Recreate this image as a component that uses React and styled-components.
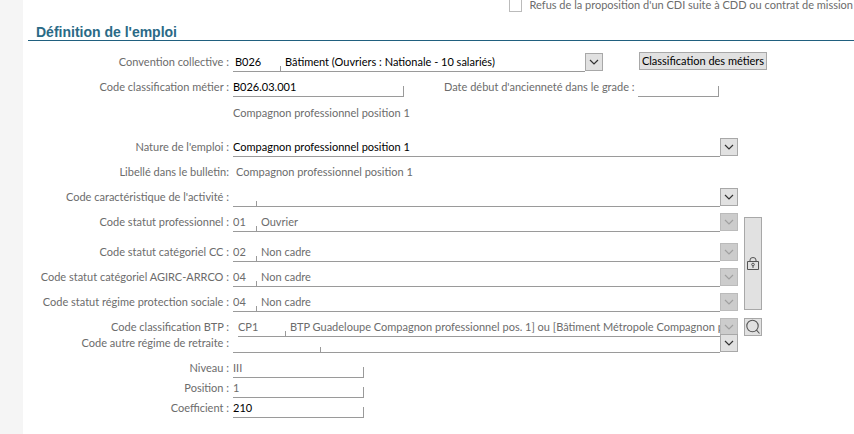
import styled, { createGlobalStyle } from "styled-components"

export default function App() {
    return (
        <Page>
            <GlobalStyle />
            <Margin />
            <Main>
                <Refusal>
                    <input type="checkbox" id="refus" />
                    <label htmlFor="refus">Refus de la proposition d'un CDI suite à CDD ou contrat de mission</label>
                </Refusal>
                <Title>Définition de l'emploi</Title>
                <Form>
                    <Row>
                        <Label htmlFor="convention">Convention collective :</Label>
                        <ShortCombo>
                            <Combo id="convention" code="B026" codeWidth={47} indent={2} text="Bâtiment (Ouvriers : Nationale - 10 salariés)" />
                        </ShortCombo>
                        <MetierButton type="button">Classification des métiers</MetierButton>
                    </Row>
                    <Row $gap={6}>
                        <Label htmlFor="metier">Code classification métier :</Label>
                        <Notched id="metier" value="B026.03.001" width={171} />
                        <DateLabel htmlFor="grade">Date début d'ancienneté dans le grade :</DateLabel>
                        <Notched id="grade" value="" width={81} />
                    </Row>
                    <Row $gap={7}>
                        <Label as="span" />
                        <Text>Compagnon professionnel position 1</Text>
                    </Row>
                    <Row $gap={15}>
                        <Label htmlFor="nature">Nature de l'emploi :</Label>
                        <Combo id="nature" text="Compagnon professionnel position 1" />
                        <Side />
                    </Row>
                    <Row $gap={6}>
                        <Label as="span">Libellé dans le bulletin:</Label>
                        <Text $indent={3}>Compagnon professionnel position 1</Text>
                    </Row>
                    <Row $gap={6}>
                        <Label htmlFor="activite">Code caractéristique de l'activité :</Label>
                        <Combo id="activite" code="" codeWidth={23} text="" />
                        <Side />
                    </Row>
                    <LockedGroup>
                        <LockedRows>
                            {statuts.map((statut) => (
                                <Row key={statut.id} $gap={statut.gap}>
                                    <Label htmlFor={statut.id}>{statut.label}</Label>
                                    <Combo id={statut.id} code={statut.code} codeWidth={23} text={statut.text} disabled />
                                </Row>
                            ))}
                        </LockedRows>
                        <LockButton type="button" aria-label="Verrouiller">
                            <LockIcon />
                        </LockButton>
                    </LockedGroup>
                    <Row $gap={6}>
                        <Label htmlFor="btp">Code classification BTP :</Label>
                        <Inset>
                            <Combo
                                id="btp"
                                code="CP1"
                                codeWidth={47}
                                text="BTP Guadeloupe Compagnon professionnel pos. 1] ou [Bâtiment Métropole Compagnon pro"
                                disabled
                            />
                        </Inset>
                        <Side>
                            <SquareButton type="button" aria-label="Rechercher">
                                <SearchIcon />
                            </SquareButton>
                        </Side>
                    </Row>
                    <Row $gap={-3}>
                        <Label htmlFor="retraite">Code autre régime de retraite :</Label>
                        <Combo id="retraite" code="" codeWidth={87} text="" />
                        <Side />
                    </Row>
                    <Row $gap={6}>
                        <Label htmlFor="niveau">Niveau :</Label>
                        <Notched id="niveau" value="III" width={131} disabled />
                    </Row>
                    <Row $gap={1}>
                        <Label htmlFor="position">Position :</Label>
                        <Notched id="position" value="1" width={131} disabled />
                    </Row>
                    <Row $gap={1}>
                        <Label htmlFor="coefficient">Coefficient :</Label>
                        <Notched id="coefficient" value="210" width={131} />
                    </Row>
                </Form>
            </Main>
        </Page>
    )
}

const statuts = [
    { id: "professionnel", label: "Code statut professionnel :", code: "01", text: "Ouvrier", gap: 0 },
    { id: "categoriel", label: "Code statut catégoriel CC :", code: "02", text: "Non cadre", gap: 11 },
    { id: "agirc", label: "Code statut catégoriel AGIRC-ARRCO :", code: "04", text: "Non cadre", gap: 6 },
    { id: "protection", label: "Code statut régime protection sociale :", code: "04", text: "Non cadre", gap: 6 },
]

function Combo({ id, code, codeWidth, indent, text, disabled }) {
    const hasCode = code !== undefined
    return (
        <ComboBox>
            <Line>
                {hasCode && (
                    <>
                        <Input id={id} defaultValue={code} disabled={disabled} $width={codeWidth} $indent={indent} />
                        <Tick $height={5} />
                    </>
                )}
                <Select
                    id={hasCode ? id + "-libelle" : id}
                    aria-label={hasCode ? "Libellé" : undefined}
                    disabled={disabled}
                    $indent={hasCode ? 4 : 0}
                >
                    <option>{text}</option>
                </Select>
            </Line>
            <SquareButton type="button" aria-label="Ouvrir la liste" disabled={disabled}>
                <Chevron />
            </SquareButton>
        </ComboBox>
    )
}

function Notched({ id, value, width, disabled }) {
    return (
        <NotchedLine $width={width}>
            <Input id={id} defaultValue={value} disabled={disabled} />
            <Tick $height={10} />
        </NotchedLine>
    )
}

function Chevron() {
    return (
        <svg width="10" height="6" viewBox="0 0 10 6" fill="none" stroke="currentColor" strokeWidth="1.2">
            <path d="M1 1l4 4 4-4" />
        </svg>
    )
}

function LockIcon() {
    return (
        <svg width="12" height="14" viewBox="0 0 12 14" fill="none" stroke="#555" strokeWidth="1">
            <path d="M.5 4.500h11v8H.5z" />
            <path d="M3 4V3Q3 .5 6 .5T9 3v1" />
            <circle cx="6" cy="7.500" r="1.300" />
            <path d="M6 9v2" />
        </svg>
    )
}

function SearchIcon() {
    return (
        <svg width="16" height="16" viewBox="0 0 16 16" fill="none" stroke="#555" strokeWidth="1.1">
            <circle cx="7.500" cy="7" r="5.700" />
            <path d="M11.500 11.200l3 3.300" />
        </svg>
    )
}

const GlobalStyle = createGlobalStyle`
    *{
        box-sizing: border-box;
    }
    body{
        margin: 0;
        background: #fff;
        overflow: hidden;
    }
    body, input, select, button{
        font-family: Lato, sans-serif;
        font-size: 11px;
        line-height: 16px;
        color: #6c6c6c;
    }
`

const Page = styled.div`
    display: flex;
    min-height: 100vh;
`

const Margin = styled.div`
    flex: none;
    width: 23px;
    background: #f5f5f5;
`

const Main = styled.main`
    flex: 1;
    min-width: 0;
`

const Refusal = styled.div`
    display: flex;
    justify-content: flex-end;
    align-items: center;
    gap: 8px;
    height: 18px;
    margin-top: -4px;
    padding-right: 1px;
    white-space: nowrap;
    input{
        appearance: none;
        width: 13px;
        height: 13px;
        margin: 0;
        border: 1px solid #bbb;
        background: #fff;
    }
`

const Title = styled.h2`
    margin: 10px 0 12px 5px;
    padding-left: 8px;
    border-bottom: 1px solid #20607f;
    font-family: "Liberation Sans", Arial, sans-serif;
    font-size: 14px;
    line-height: 16px;
    color: #2a6a86;
`

const Form = styled.form`
    display: flex;
    flex-direction: column;
    padding-right: 92px;
`

const Row = styled.div`
    display: flex;
    gap: 4px;
    height: 19px;
    margin-top: ${props => props.$gap || 0}px;
    white-space: nowrap;
`

const Label = styled.label`
    flex: none;
    width: 206px;
    line-height: 18px;
    text-align: right;
`

const DateLabel = styled.label`
    width: 190px;
    margin-left: 36px;
    line-height: 18px;
`

const Text = styled.span`
    padding-left: ${props => props.$indent || 0}px;
    line-height: 18px;
`

const ComboBox = styled.div`
    display: flex;
    flex: 1;
    align-items: flex-start;
    min-width: 0;
`

const ShortCombo = styled.div`
    display: flex;
    flex: none;
    width: 370px;
`

const Inset = styled.div`
    display: flex;
    flex: 1;
    min-width: 0;
    padding-left: 5px;
`

const Line = styled.div`
    display: flex;
    flex: 1;
    align-items: flex-end;
    height: 19px;
    min-width: 0;
    border-bottom: 1px solid #9a9a9a;
`

const NotchedLine = styled(Line)`
    flex: none;
    width: ${props => props.$width}px;
`

const Tick = styled.span`
    flex: none;
    width: 1px;
    height: ${props => props.$height}px;
    background: #9a9a9a;
`

const Input = styled.input`
    flex: ${props => props.$width ? "none" : 1};
    width: ${props => props.$width ? props.$width + "px" : "auto"};
    min-width: 0;
    height: 18px;
    padding: 0 0 1px ${props => props.$indent || 0}px;
    border: 0;
    outline: 0;
    background: none;
    color: ${props => props.disabled ? "#6c6c6c" : "#000"};
`

const Select = styled.select`
    appearance: none;
    flex: 1;
    min-width: 0;
    height: 18px;
    padding: 0 0 0 ${props => props.$indent}px;
    border: 0;
    outline: 0;
    background: none;
    color: ${props => props.disabled ? "#6c6c6c" : "#000"};
    opacity: 1;
    text-overflow: clip;
`

const Button = styled.button`
    display: flex;
    flex: none;
    align-items: center;
    justify-content: center;
    padding: 0;
    border: 1px solid #a8a8a8;
    background: #e1e1e1;
    color: #333;
    &:disabled{
        border-color: #bbb;
        background: #ccc;
        color: #a0a0a0;
    }
`

const SquareButton = styled(Button)`
    width: 18px;
    height: 18px;
`

const MetierButton = styled(Button)`
    width: 128px;
    height: 18px;
    margin: -1px 0 0 32px;
    color: #000;
`

const Side = styled.div`
    flex: none;
    width: 20px;
    padding-left: 2px;
`

const LockedGroup = styled.div`
    display: flex;
    gap: 6px;
    margin-top: 6px;
`

const LockedRows = styled.div`
    flex: 1;
    min-width: 0;
`

const LockButton = styled(Button)`
    width: 18px;
    margin: 4px 0 2px;
`
